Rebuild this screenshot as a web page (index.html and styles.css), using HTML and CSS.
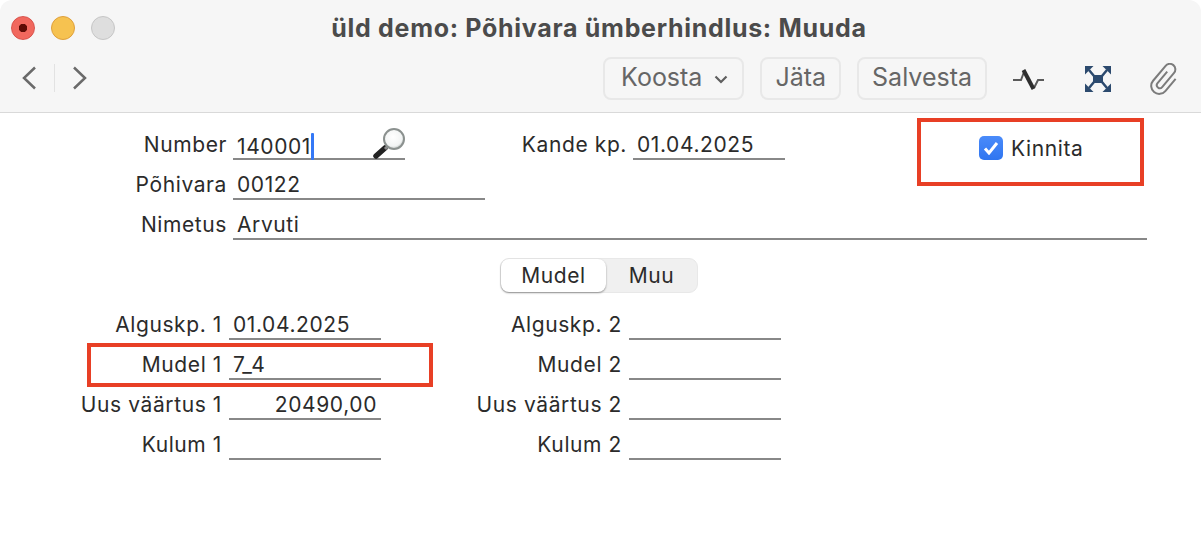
FILE: index.html
```html
<!DOCTYPE html>
<html lang="en">
<head>
    <meta charset="UTF-8">
    <meta name="viewport" content="width=device-width, initial-scale=1.0">
    <title>Põhivara ümberhindlus</title>
    <link rel="stylesheet" href="styles.css">
</head>
<body>
<div class="window">

    <header class="top">
        <div class="titlebar">
            <div class="lights">
                <span class="light light-red"></span>
                <span class="light light-yellow"></span>
                <span class="light light-grey"></span>
            </div>
            <div class="title">üld demo: Põhivara ümberhindlus: Muuda</div>
        </div>
        <div class="toolbar">
            <div class="nav">
                <svg class="chevron" width="16" height="24" viewBox="0 0 16 24"><path d="M14 1.500 3 12l11 10.500"/></svg>
                <span class="nav-sep"></span>
                <svg class="chevron" width="16" height="24" viewBox="0 0 16 24"><path d="M2 1.500 13 12 2 22.500"/></svg>
            </div>
            <div class="actions">
                <a class="button button-menu">Koosta
                    <svg width="14" height="9" viewBox="0 0 14 9"><path d="M1.500 1.500 7 7l5.500-5.500" fill="none" stroke="#5f5f5f" stroke-width="2.200"/></svg>
                </a>
                <a class="button">Jäta</a>
                <a class="button">Salvesta</a>
                <svg class="tool tool-pulse" width="34" height="26" viewBox="0 0 34 26">
                    <path d="M1 14h8l3-8M22 22l4-8h6" fill="none" stroke="#5a5a5a" stroke-width="2"/>
                    <path d="M11.500 4 21.500 23" fill="none" stroke="#2e2e2e" stroke-width="4"/>
                </svg>
                <svg class="tool tool-expand" width="26" height="28" viewBox="0 0 26 28" fill="#2c4a6e">
                    <rect x="8" y="10" width="10" height="8"/>
                    <path d="M0 1h8.500L0 9.500z"/>
                    <path d="M26 1h-8.500L26 9.500z"/>
                    <path d="M0 27h8.500L0 18.500z"/>
                    <path d="M26 27h-8.500L26 18.500z"/>
                    <path d="M4 5l5 6M22 5l-5 6M4 23l5-6M22 23l-5-6" stroke="#2c4a6e" stroke-width="2.500"/>
                </svg>
                <svg class="tool tool-clip" width="30" height="32" viewBox="0 0 30 32">
                    <path transform="rotate(40 15 16)" d="M12 9v15a3 3 0 0 0 6 0V5.500a5.500 5.500 0 0 0-11 0V25a8 8 0 0 0 16 0V9" fill="none" stroke="#7c7c7c" stroke-width="2"/>
                </svg>
            </div>
        </div>
    </header>

    <form class="form">
        <div class="row">
            <label class="label label-top">Number</label>
            <div class="field field-number"><span>140001</span><i class="caret"></i>
                <svg class="lookup" width="34" height="32" viewBox="0 0 34 32">
                    <defs>
                        <radialGradient id="glass" cx="45%" cy="40%" r="65%">
                            <stop offset="0" stop-color="#fff"/>
                            <stop offset="0.7" stop-color="#f2f4f4"/>
                            <stop offset="1" stop-color="#a9b0ae"/>
                        </radialGradient>
                    </defs>
                    <path d="M13 20 4 28" stroke="#222" stroke-width="5.500" stroke-linecap="round"/>
                    <path d="M16 18l-3 3" stroke="#8a8a8a" stroke-width="3"/>
                    <circle cx="22" cy="11" r="10" fill="url(#glass)" stroke="#8b918f" stroke-width="2"/>
                </svg>
            </div>
            <label class="label label-date">Kande kp.</label>
            <div class="field field-date">01.04.2025</div>
        </div>
        <div class="row">
            <label class="label label-top">Põhivara</label>
            <div class="field field-asset">00122</div>
        </div>
        <div class="row">
            <label class="label label-top">Nimetus</label>
            <div class="field field-name">Arvuti</div>
        </div>

        <div class="tabs-wrap">
            <div class="tabs">
                <span class="tab tab-active">Mudel</span>
                <span class="tab">Muu</span>
            </div>
        </div>

        <div class="models">
            <label class="label">Alguskp. 1</label><div class="field">01.04.2025</div>
            <label class="label">Alguskp. 2</label><div class="field"></div>
            <label class="label">Mudel 1</label><div class="field">7_4</div>
            <label class="label">Mudel 2</label><div class="field"></div>
            <label class="label">Uus väärtus 1</label><div class="field field-amount">20490,00</div>
            <label class="label">Uus väärtus 2</label><div class="field"></div>
            <label class="label">Kulum 1</label><div class="field"></div>
            <label class="label">Kulum 2</label><div class="field"></div>
        </div>

        <!-- red annotation frames drawn over the form -->
        <div class="mark mark-confirm">
            <span class="check">
                <svg width="16" height="14" viewBox="0 0 16 14"><path d="M2 7.500 6 12l8-10" fill="none" stroke="#fff" stroke-width="3"/></svg>
            </span>
            <span class="check-text">Kinnita</span>
        </div>
        <div class="mark mark-model"></div>
    </form>

</div>
</body>
</html>
```

FILE: styles.css
```css
body {
    margin: 0;
    padding: 0;
    background-color: #fff;
    overflow: hidden;
    font-family: Inter, "Noto Sans", sans-serif;
    font-size: 21px;
    letter-spacing: 0.6px;
    color: #2b2b2b;
}

.window {
    width: 1201px;
    height: 546px;
    box-sizing: border-box;
    border-radius: 12px 12px 0 0;
    overflow: hidden;
    background-color: #fff;
}

.top {
    height: 113px;
    box-sizing: border-box;
    background-color: #f6f6f6;
    border-bottom: 1px solid #d9d9d9;
}

.titlebar {
    position: relative;
    height: 56px;
    display: flex;
    align-items: center;
    padding-left: 11px;
}

.lights {
    display: flex;
    gap: 16px;
}

.light {
    width: 24px;
    height: 24px;
    box-sizing: border-box;
    border-radius: 50%;
    border: 1px solid #c6c6c6;
    background-color: #dedede;
}

.light-red {
    border-color: #d9534c;
    background: radial-gradient(circle, #5e0b05 0, #5e0b05 4px, #f1685e 4.500px);
}

.light-yellow {
    border-color: #dfa03c;
    background-color: #f6c250;
}

.title {
    position: absolute;
    left: 0;
    right: 3px;
    text-align: center;
    font-size: 25px;
    font-weight: 700;
    letter-spacing: 0.7px;
    color: #4b4b4b;
}

.toolbar {
    height: 56px;
    display: flex;
    align-items: flex-start;
    justify-content: space-between;
}

.nav {
    display: flex;
    align-items: center;
    height: 42px;
    margin-top: 1px;
    padding-left: 21px;
}

.chevron path {
    fill: none;
    stroke: #6a6a6a;
    stroke-width: 2.500;
}

.nav-sep {
    width: 1px;
    height: 28px;
    margin: 0 17px 0 17px;
    background-color: #e2e2e2;
}

.actions {
    display: flex;
    align-items: center;
    padding-top: 1px;
    padding-right: 21px;
}

.button {
    display: flex;
    align-items: center;
    justify-content: center;
    height: 43px;
    box-sizing: border-box;
    margin-right: 16px;
    padding: 0 13px 3px;
    border: 2px solid #e8e8e8;
    border-radius: 8px;
    font-size: 25px;
    letter-spacing: 0;
    color: #666;
}

.button-menu {
    gap: 12px;
    padding: 0 14px 3px 16px;
}

.button-menu svg {
    margin-top: 4px;
}

.tool {
    display: block;
}

.tool-pulse {
    margin: 0 39px 0 9px;
}

.tool-expand {
    margin-right: 39px;
}

.form {
    position: relative;
    display: block;
    padding-top: 7px;
}

.row {
    display: flex;
    height: 40px;
}

.label {
    display: block;
    height: 40px;
    box-sizing: border-box;
    padding-top: 13px;
    line-height: 24px;
    text-align: right;
    white-space: nowrap;
}

.label-top {
    width: 227px;
    margin-right: -1px;
}

.label-date {
    width: 222px;
    margin-right: -1px;
}

.field {
    position: relative;
    height: 40px;
    box-sizing: border-box;
    margin-left: 7px;
    padding-top: 13px;
    padding-left: 4px;
    line-height: 24px;
    border-bottom: 2px solid #888;
}

.field-number {
    width: 172px;
}

.field-date {
    width: 152px;
}

.field-asset {
    width: 252px;
}

.field-name {
    width: 914px;
}

.field-amount {
    padding-right: 4px;
    text-align: right;
}

.caret {
    display: inline-block;
    width: 3px;
    height: 27px;
    border-radius: 1px;
    vertical-align: -6px;
    background-color: #3478f6;
}

.lookup {
    position: absolute;
    right: -1px;
    top: 8px;
}

.tabs-wrap {
    display: flex;
    justify-content: center;
    padding: 18px 3px 7px 0;
}

.tabs {
    display: flex;
    height: 35px;
    box-sizing: border-box;
    border-radius: 9px;
    background-color: #f0f0f0;
    border: 1px solid #e8e8e8;
}

.tab {
    width: 91px;
    line-height: 33px;
    text-align: center;
}

.tab-active {
    width: 105px;
    border-radius: 8px;
    background-color: #fff;
    box-shadow: 0 1px 2px rgba(0, 0, 0, 0.4);
}

.models {
    display: grid;
    grid-template-columns: 222px 159px 241px 159px;
    grid-auto-rows: 40px;
}

.models .field {
    width: 152px;
}

.mark {
    position: absolute;
    box-sizing: border-box;
    border: 4px solid #e83f25;
}

.mark-confirm {
    left: 917px;
    top: 5px;
    width: 227px;
    height: 68px;
    display: flex;
    align-items: center;
    padding-left: 58px;
    padding-bottom: 8px;
    gap: 8px;
}

.mark-model {
    left: 87px;
    top: 230px;
    width: 346px;
    height: 44px;
}

.check {
    display: flex;
    align-items: center;
    justify-content: center;
    width: 24px;
    height: 24px;
    border-radius: 5px;
    background: linear-gradient(#4a8bfa, #2f75f0);
}
```
